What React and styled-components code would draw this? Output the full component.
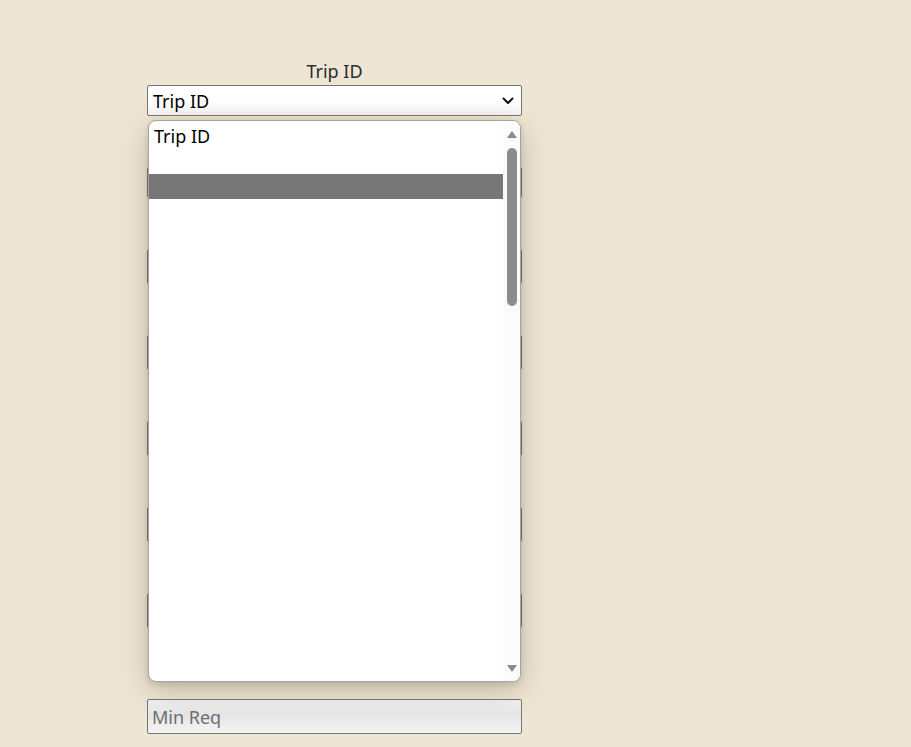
import styled, { createGlobalStyle } from 'styled-components';

const GlobalStyle = createGlobalStyle`
  html, body {
    margin: 0;
    padding: 0;
    background: #eee6d4;
    font-family: "Noto Sans", "Open Sans", sans-serif;
  }
`;

const Page = styled.div`
  min-height: 747px;
  padding: 60px 0 0 147px;
  box-sizing: border-box;
`;

const Form = styled.form`
  position: relative;
  width: 375px;
  display: flex;
  flex-direction: column;
`;

const Field = styled.div`
  display: flex;
  flex-direction: column;
  margin-bottom: ${props => props.gap || 26}px;
`;

const Label = styled.label`
  text-align: center;
  font-size: 18px;
  line-height: 22px;
  color: #2b2b2b;
  margin-bottom: 3px;
`;

const SelectWrap = styled.div`
  position: relative;
  height: 31px;

  svg {
    position: absolute;
    right: 8px;
    top: 12px;
    pointer-events: none;
  }
`;

const Select = styled.select`
  appearance: none;
  width: 100%;
  height: 31px;
  box-sizing: border-box;
  border: 1px solid #767676;
  border-radius: 2px;
  background: linear-gradient(to bottom, #ffffff 60%, #f4f4f4);
  font-family: inherit;
  font-size: 18px;
  color: #000;
  padding: 0 0 0 5px;
  margin: 0;
`;

const Input = styled.input`
  width: 100%;
  height: 35px;
  box-sizing: border-box;
  border: 1px solid #767676;
  border-radius: 2px;
  background: linear-gradient(to bottom, #f3f3f3, #e6e6e6 45%, #f4f4f4);
  font-family: inherit;
  font-size: 18px;
  padding: 0 4px;
  margin: 0;

  &::placeholder {
    color: #6f6f6f;
  }
`;

const Popup = styled.div`
  position: absolute;
  left: 1px;
  top: 60px;
  width: 373px;
  height: 562px;
  box-sizing: border-box;
  background: #ffffff;
  border: 1px solid #a3a3a3;
  border-radius: 8px;
  box-shadow: 0 8px 28px rgba(80, 64, 30, 0.28), 0 2px 6px rgba(0, 0, 0, 0.12);
  display: flex;
  overflow: hidden;
  z-index: 10;
`;

const OptionList = styled.ul`
  list-style: none;
  margin: 0;
  padding: 3px 0 0 0;
  flex: 1;
`;

const Option = styled.li`
  height: 25px;
  line-height: 24px;
  padding-left: 5px;
  font-size: 18px;
  color: #000;
  background: ${props => (props.active ? '#777777' : 'transparent')};
`;

const Scrollbar = styled.div`
  width: 17px;
  background: #fbfbfb;
  display: flex;
  flex-direction: column;
  align-items: center;
  padding: 10px 0 9px;
  box-sizing: border-box;
`;

const Arrow = styled.div`
  width: 0;
  height: 0;
  border-left: 5.5px solid transparent;
  border-right: 5.5px solid transparent;
  ${props =>
    props.down
      ? 'border-top: 7px solid #8a8a8a;'
      : 'border-bottom: 7px solid #8a8a8a;'}
`;

const Track = styled.div`
  flex: 1;
  width: 100%;
  display: flex;
  justify-content: center;
  padding-top: 10px;
`;

const Thumb = styled.div`
  width: 10px;
  height: 158px;
  border-radius: 5px;
  background: #8c8c8c;
`;

const Chevron = () => (
  <svg width="12" height="8" viewBox="0 0 12 8" fill="none">
    <path d="M1.5 1.5 L6 6 L10.5 1.5" stroke="#111" strokeWidth="2" strokeLinecap="round" strokeLinejoin="round" />
  </svg>
);

const inputFields = ['Driver', 'Vehicle', 'Start Time', 'End Time', 'Capacity'];

export default function App() {
  return (
    <>
      <GlobalStyle />
      <Page>
        <Form onSubmit={e => e.preventDefault()}>
          <Field>
            <Label>Trip ID</Label>
            <SelectWrap>
              <Select defaultValue="trip">
                <option value="trip">Trip ID</option>
                <option value=""></option>
              </Select>
              <Chevron />
            </SelectWrap>
          </Field>

          <Field>
            <Label>Route ID</Label>
            <SelectWrap>
              <Select defaultValue="">
                <option value="">Route ID</option>
              </Select>
              <Chevron />
            </SelectWrap>
          </Field>

          {inputFields.map((name, i) => (
            <Field key={name} gap={i === inputFields.length - 1 ? 71 : 26}>
              <Label>{name}</Label>
              <Input placeholder={name} />
            </Field>
          ))}

          <Field>
            <Input placeholder="Min Req" />
          </Field>

          <Popup>
            <OptionList>
              <Option>Trip ID</Option>
              <Option />
              <Option active />
            </OptionList>
            <Scrollbar>
              <Arrow />
              <Track>
                <Thumb />
              </Track>
              <Arrow down />
            </Scrollbar>
          </Popup>
        </Form>
      </Page>
    </>
  );
}
